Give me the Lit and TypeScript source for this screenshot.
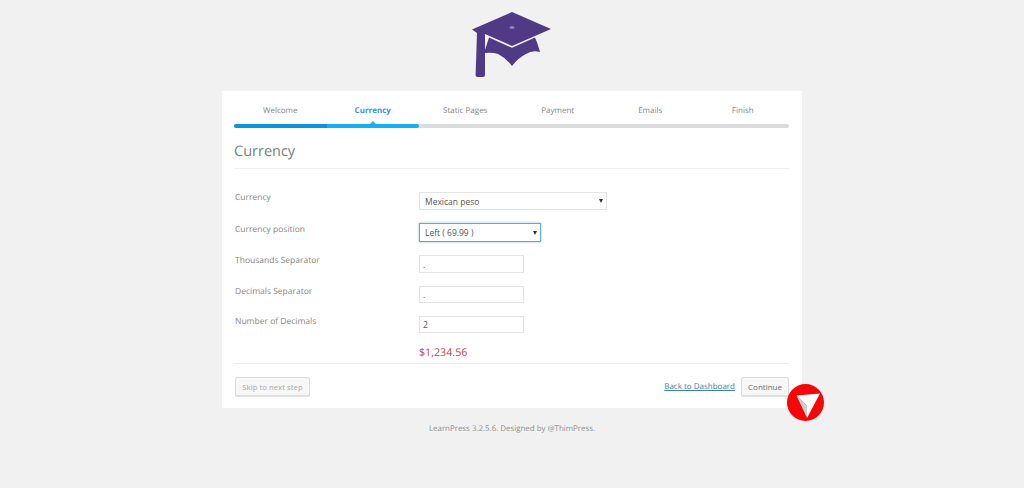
import { LitElement, html, css, svg } from "lit";
import { customElement } from "lit/decorators.js";

const steps = ["Welcome", "Currency", "Static Pages", "Payment", "Emails", "Finish"];
const rows = [
  { label: "Thousands Separator", value: "." },
  { label: "Decimals Separator", value: "." },
  { label: "Number of Decimals", value: "2" },
];

const logo = svg`<svg class="logo" viewBox="0 0 80 66" width="80" height="66" aria-hidden="true">
  <path fill="#4f3a86" d="M40 0 L79 17 L40 34 L13 22 L13 63 Q13 65 11 65 L5.5 65 Q3.5 65 3.6 63 L5 21 L0 17.5 Z"/>
  <ellipse cx="40" cy="15.5" rx="2.6" ry="1.3" fill="#9a8dbd"/>
  <path fill="#4f3a86" d="M17 25.5 L40 35.8 L63 25.5 Q66 32 68 40 Q60 38 54 42 Q46 46 40 54 Q34 46 26 42 Q20 40 13 41 L13 38 Z"/>
</svg>`;

@customElement("app-root")
export class AppRoot extends LitElement {
  static styles = css`
    :host {
      display: block;
      width: 1024px;
      height: 488px;
      background: #f1f1f1;
      font-family: "Open Sans", "Noto Sans", sans-serif;
      color: #777;
      overflow: hidden;
      text-rendering: geometricPrecision;
    }
    .head {
      height: 91px;
      display: flex;
      justify-content: center;
      align-items: flex-start;
      padding-top: 12px;
      box-sizing: border-box;
    }
    .logo { display: block; }
    .card {
      position: relative;
      width: 580px;
      height: 317px;
      margin-left: 222px;
      background: #fff;
      box-sizing: border-box;
      padding: 0 13px 0 12px;
    }
    .steps {
      display: grid;
      grid-template-columns: repeat(6, 1fr);
      height: 33px;
    }
    .step {
      position: relative;
      text-align: center;
      font-size: 8px;
      line-height: 12px;
      padding-top: 14px;
      color: #858585;
    }
    .step.on { color: #3a94d0; font-weight: 700; }
    .step.on::after {
      content: "";
      position: absolute;
      left: 50%;
      bottom: 0;
      margin-left: -3px;
      border: 3px solid transparent;
      border-top: 0;
      border-bottom-color: #5f9fc4;
    }
    .bar {
      display: flex;
      height: 4px;
      border-radius: 2px;
      overflow: hidden;
      background: #dcdcdc;
    }
    .bar i { display: block; height: 100%; }
    .bar .a { width: 93px; background: #0c94e0; }
    .bar .b { width: 92px; background: #12b0f4; border-radius: 0 2px 2px 0; }
    h1 {
      margin: 0;
      height: 41px;
      box-sizing: border-box;
      padding-top: 14px;
      font-size: 14.5px;
      line-height: 20px;
      font-weight: 400;
      color: #7d7d7d;
      border-bottom: 1px solid #eee;
    }
    form { display: grid; row-gap: 13px; padding: 23px 0 0 1px; }
    .row {
      display: grid;
      grid-template-columns: 184px auto;
      justify-content: start;
      align-items: start;
    }
    label { font-size: 8.5px; line-height: 12px; color: #888; }
    .second label { margin-top: 1px; }
    .drop { position: relative; display: block; }
    .drop::after {
      content: "";
      position: absolute;
      right: 4px;
      top: 50%;
      margin-top: -2px;
      border-left: 2.5px solid transparent;
      border-right: 2.5px solid transparent;
      border-top: 4px solid #333;
      pointer-events: none;
    }
    select, .field {
      display: block;
      box-sizing: border-box;
      margin: 0;
      font-family: inherit;
      font-size: 8.5px;
      color: #555;
      background: #fff;
      border: 1px solid #e4e4e4;
      border-radius: 0;
      outline: 0;
      padding: 0 0 0 5px;
      appearance: none;
    }
    .sel1 { width: 188px; height: 18px; }
    .sel2 { width: 122px; height: 19px; border-color: #6aa7cf; box-shadow: 0 0 2px #7db9dc; }
    .field { width: 105px; height: 18px; padding-left: 3px; }
    .h17 { height: 17px; }
    .price {
      margin: 13px 0 0 185px;
      font-size: 10.7px;
      line-height: 14px;
      color: #c9434c;
      height: 14px;
    }
    .foot {
      border-top: 1px solid #eee;
      margin-top: 3px;
      padding: 13px 0 0 1px;
      display: flex;
      align-items: center;
    }
    button {
      box-sizing: border-box;
      height: 19px;
      margin: 0;
      padding: 0;
      font-family: inherit;
      font-size: 8px;
      border: 1px solid #ddd;
      border-radius: 2px;
      background: #f7f7f7;
      box-shadow: 0 1px 0 #e2e2e2;
    }
    .skip { width: 75px; color: #aaa; font-size: 7.8px; }
    .back {
      margin-left: auto;
      font-size: 8px;
      color: #3a84a3;
      text-decoration: underline;
    }
    .cont { width: 48px; margin-left: 6px; color: #6b6b6b; }
    .cursor {
      position: absolute;
      left: 565px;
      top: 293px;
      width: 37px;
      height: 37px;
    }
    .copy {
      text-align: center;
      font-size: 7.9px;
      line-height: 12px;
      margin-top: 15px;
      color: #919191;
    }
  `;

  render() {
    return html`
      <div class="head">${logo}</div>
      <main class="card">
        <div class="steps">
          ${steps.map((s, i) => html`<div class="step ${i === 1 ? "on" : ""}">${s}</div>`)}
        </div>
        <div class="bar"><i class="a"></i><i class="b"></i></div>
        <h1>Currency</h1>
        <form>
          <div class="row">
            <label>Currency</label>
            <span class="drop"><select class="sel1"><option>Mexican peso</option></select></span>
          </div>
          <div class="row second">
            <label>Currency position</label>
            <span class="drop"><select class="sel2"><option>Left ( 69.99 )</option></select></span>
          </div>
          ${rows.map(
            (r, i) => html`<div class="row">
              <label>${r.label}</label>
              <input class="field ${i > 0 ? "h17" : ""}" .value=${r.value} />
            </div>`
          )}
        </form>
        <div class="price">$1,234.56</div>
        <div class="foot">
          <button type="button" class="skip">Skip to next step</button>
          <a class="back">Back to Dashboard</a>
          <button type="button" class="cont">Continue</button>
        </div>
        <svg class="cursor" viewBox="0 0 37 37" aria-hidden="true">
          <circle cx="18.5" cy="18.5" r="18.5" fill="#f60606"/>
          <path fill="#fff" d="M9.5 11.5 L33 9.5 L20 34 L20 22 Z"/>
          <path fill="#cfcfcf" d="M9.5 11.5 L20 22 L20 34 Z"/>
        </svg>
      </main>
      <div class="copy">LearnPress 3.2.5.6. Designed by @ThimPress.</div>
    `;
  }
}
